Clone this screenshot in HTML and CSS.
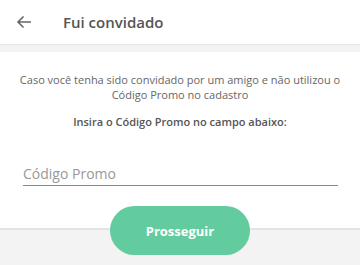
FILE: index.html
```html
<!DOCTYPE html>
<html>
    <head>
        <meta charset="utf-8">
        <link rel="stylesheet" href="styles.css">
    </head>

    <body>
        <div class="header">
            <svg class="back" width="16" height="14" viewBox="0 0 16 14">
                <path d="M15 7H2M7.5 1.5L2 7l5.5 5.5" fill="none" stroke="#666" stroke-width="1.6"/>
            </svg>
            <div class="title">Fui convidado</div>
        </div>
        <div class="strip"></div>

        <div class="content">
            <p class="info">Caso você tenha sido convidado por um amigo e não utilizou o Código Promo no cadastro</p>
            <p class="hint">Insira o Código Promo no campo abaixo:</p>

            <input type="text" class="field" placeholder="Código Promo">
        </div>

        <div class="footer">
            <button class="btn">Prosseguir</button>
        </div>
    </body>
</html>
```

FILE: styles.css
```css
body
{
    margin: 0;
    font-family: "Open Sans", "Liberation Sans", sans-serif;
    background: white;
    overflow: hidden;
}

.header
{
    height: 45px;
    display: flex;
    align-items: center;
    border-bottom: 1px solid #e6e6e6;
    box-sizing: border-box;
}

.back
{
    margin-left: 16px;
}

.title
{
    margin-left: 31px;
    font-size: 15px;
    font-weight: 600;
    color: #555;
}

.strip
{
    height: 7px;
    background: #f3f3f3;
}

.content
{
    text-align: center;
    padding: 0 12px;
}

.info
{
    margin: 20px 0 0 0;
    font-size: 11px;
    line-height: 15px;
    color: #666;
}

.hint
{
    margin: 12px 0 0 0;
    font-size: 11px;
    line-height: 15px;
    font-weight: 600;
    color: #555;
}

.field
{
    display: block;
    width: 315px;
    height: 24px;
    margin: 32px 0 0 11px;
    padding: 0;
    border: none;
    border-bottom: 1.5px solid #8a8a8a;
    font-family: inherit;
    font-size: 14px;
    color: #555;
    outline: none;
}

.field::placeholder
{
    color: #999;
}

.footer
{
    margin-top: 20px;
    height: 59px;
    display: flex;
    justify-content: center;
    background: linear-gradient(white 0 22px, #e4e4e4 22px 24px, #f3f3f3 24px);
}

.btn
{
    width: 140px;
    height: 49px;
    border: none;
    border-radius: 25px;
    background: #63cc9e;
    color: white;
    font-family: inherit;
    font-size: 13px;
    font-weight: bold;
}
```
